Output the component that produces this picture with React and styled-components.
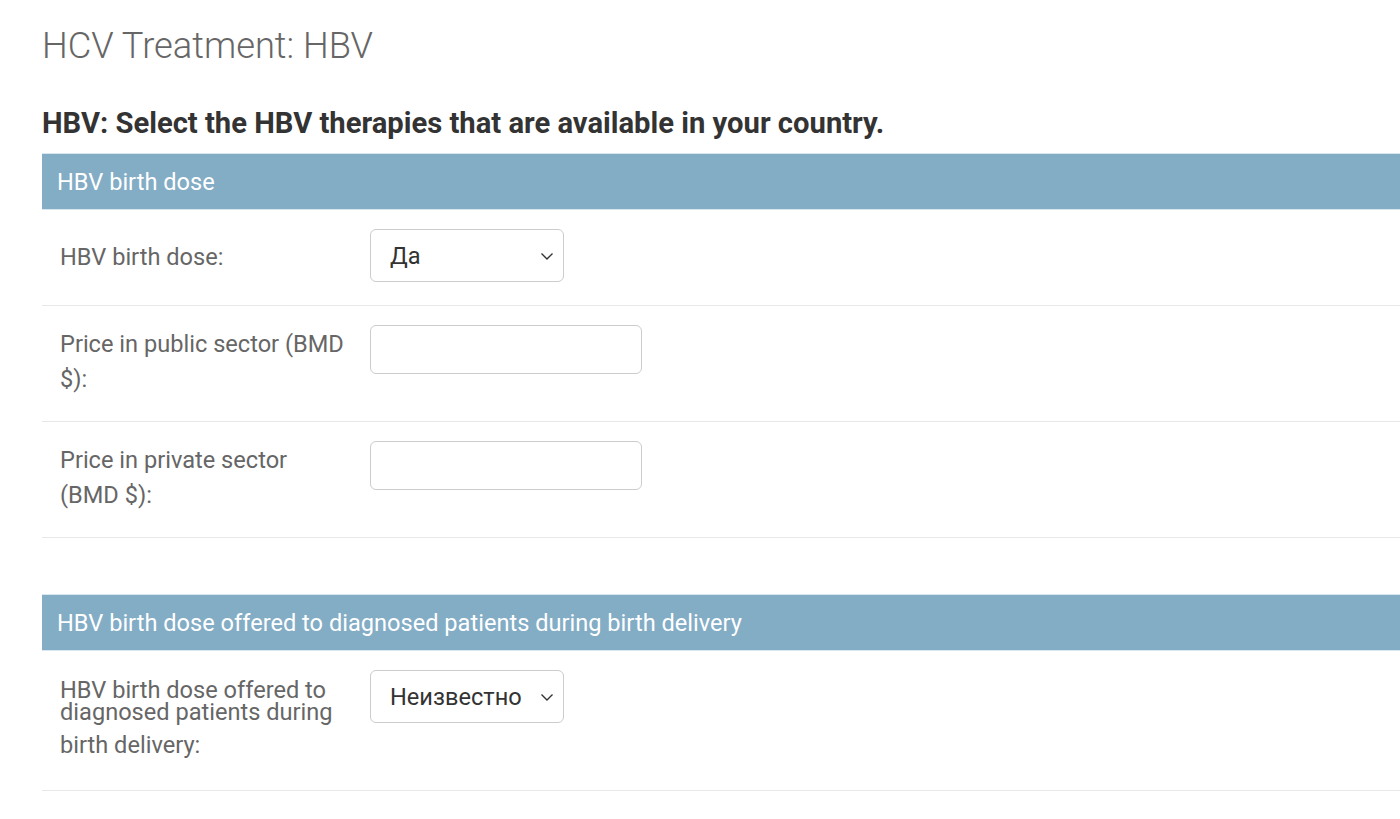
import React from "react";
import styled, { createGlobalStyle } from "styled-components";

const GlobalStyle = createGlobalStyle`
  html, body {
    margin: 0;
    padding: 0;
    background: #fff;
    overflow: hidden;
  }
  body {
    font-family: Roboto, "Liberation Sans", sans-serif;
  }
`;

const Page = styled.div`
  padding-left: 42px;
  width: 1400px;
  box-sizing: border-box;
`;

const Title = styled.h1`
  margin: 26px 0 0;
  font-size: 36.3px;
  line-height: 40px;
  font-weight: 300;
  color: #666;
`;

const Question = styled.h2`
  margin: 41px 0 14px;
  font-size: 29.2px;
  line-height: 32px;
  font-weight: 700;
  color: #333;
`;

const Fieldset = styled.fieldset`
  margin: 0 0 56px;
  padding: 0;
  border: none;
  min-width: 0;
`;

const Caption = styled.h3`
  margin: 0;
  height: 57px;
  box-sizing: border-box;
  padding: 0 15px;
  display: flex;
  align-items: center;
  background: #83acc5;
  border-top: 1px solid #dae6ee;
  border-bottom: 1px solid #dae6ee;
  color: #fff;
  font-size: 23.6px;
  font-weight: 400;
`;

const Row = styled.div`
  display: flex;
  align-items: flex-start;
  padding: 19px 18px ${(p) => p.$bottom}px;
  border-bottom: 1px solid #e8e8e8;
`;

const Label = styled.label`
  width: 310px;
  flex-shrink: 0;
  padding-top: ${(p) => p.$top}px;
  color: #666;
  font-size: 23.6px;
`;

const Line = styled.span`
  display: block;
  white-space: nowrap;
  line-height: ${(p) => (p.$tight ? 22 : 35)}px;
  padding-top: ${(p) => p.$gap || 0}px;
`;

const SelectBox = styled.div`
  position: relative;
  width: 194px;
  height: 53px;
  box-sizing: border-box;
  border: 1px solid #ccc;
  border-radius: 6px;
  display: flex;
  align-items: center;
  padding-left: ${(p) => p.$pad}px;
  color: #333;
  font-size: 23.6px;
  background: #fff;

  svg {
    position: absolute;
    right: 8px;
    top: 50%;
    transform: translateY(-50%);
  }
`;

const TextInput = styled.input`
  width: 272px;
  height: 49px;
  box-sizing: border-box;
  border: 1px solid #ccc;
  border-radius: 6px;
  margin: 0;
  padding: 0 12px;
  font-family: inherit;
  font-size: 23.6px;
  outline: none;
`;

const Chevron = () => (
  <svg width="16" height="16" viewBox="0 0 16 16" fill="none">
    <path d="M2.5 5.5 L8 11 L13.5 5.5" stroke="#333" strokeWidth="1.4" />
  </svg>
);

const App = () => (
  <Page>
    <GlobalStyle />
    <Title>HCV Treatment: HBV</Title>
    <Question>HBV: Select the HBV therapies that are available in your country.</Question>

    <Fieldset>
      <Caption>HBV birth dose</Caption>
      <Row $bottom={23}>
        <Label $top={11}>
          <Line>HBV birth dose:</Line>
        </Label>
        <SelectBox $pad={19}>
          Да
          <Chevron />
        </SelectBox>
      </Row>
      <Row $bottom={24}>
        <Label $top={2}>
          <Line>Price in public sector (BMD</Line>
          <Line>$):</Line>
        </Label>
        <TextInput type="text" />
      </Row>
      <Row $bottom={24}>
        <Label $top={2}>
          <Line>Price in private sector</Line>
          <Line>(BMD $):</Line>
        </Label>
        <TextInput type="text" />
      </Row>
    </Fieldset>

    <Fieldset>
      <Caption>HBV birth dose offered to diagnosed patients during birth delivery</Caption>
      <Row $bottom={27}>
        <Label $top={9}>
          <Line $tight>HBV birth dose offered to</Line>
          <Line $tight>diagnosed patients during</Line>
          <Line $gap={5}>birth delivery:</Line>
        </Label>
        <SelectBox $pad={19}>
          Неизвестно
          <Chevron />
        </SelectBox>
      </Row>
    </Fieldset>
  </Page>
);

export default App;
